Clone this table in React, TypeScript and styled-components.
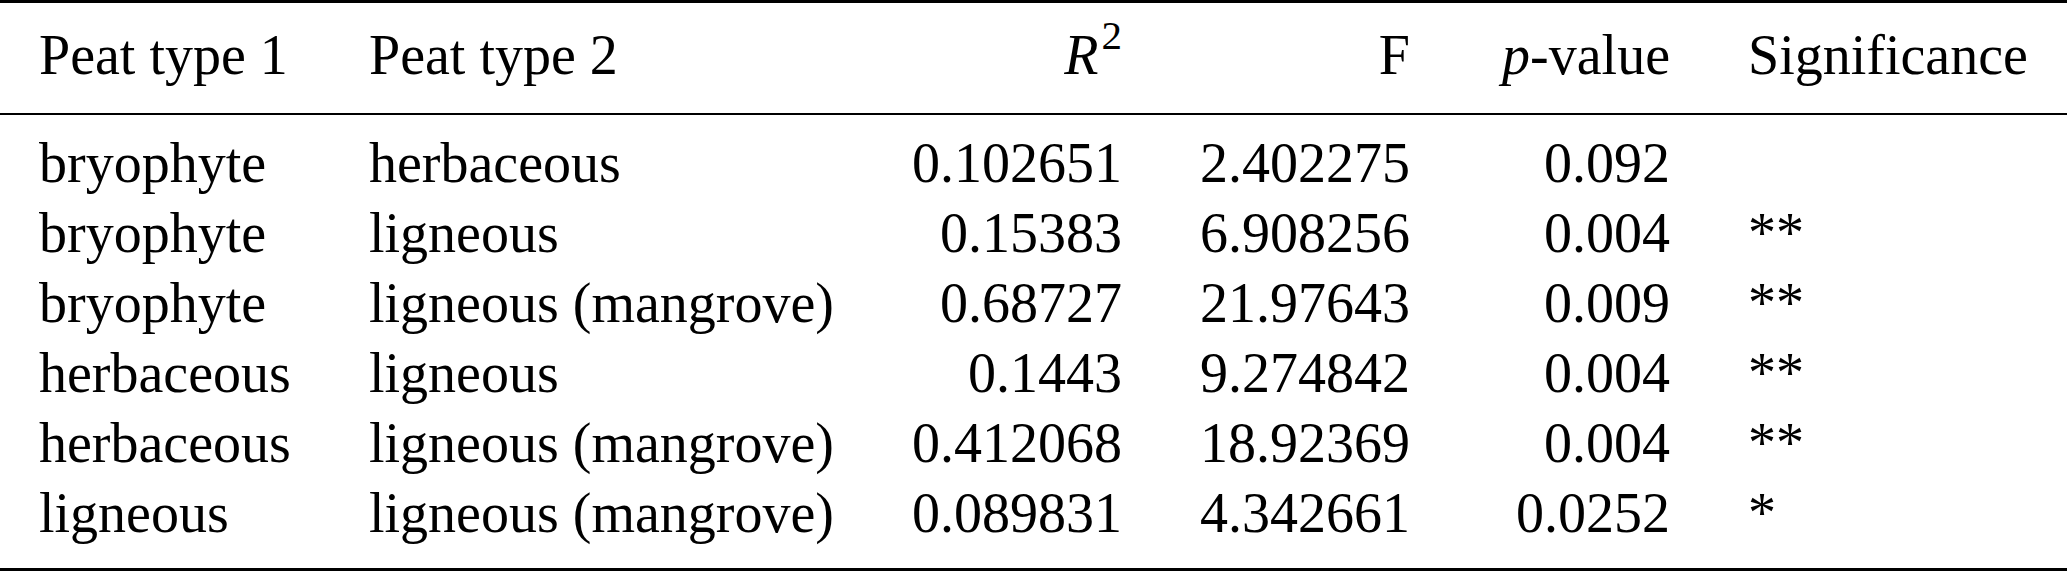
import React from "react";
import styled, { createGlobalStyle } from "styled-components";

const Global = createGlobalStyle`
  html, body {
    margin: 0;
    padding: 0;
    background: #ffffff;
    overflow: hidden;
  }
  body {
    font-family: "Liberation Serif", "Times New Roman", serif;
    color: #000000;
  }
`;

const Table = styled.div`
  width: 2067px;
  border-top: 3px solid #000;
  border-bottom: 3px solid #000;
  font-family: "Liberation Serif", "Times New Roman", serif;
  font-size: 56px;
  line-height: 70px;
  color: #000;
`;

const Section = styled.div<{ $top: number; $bottom: number; $rule?: boolean }>`
  padding: ${(p) => p.$top}px 39px ${(p) => p.$bottom}px;
  border-bottom: ${(p) => (p.$rule ? "2px solid #000" : "none")};
`;

const Row = styled.div`
  display: grid;
  grid-template-columns: 252px 465px 210px 210px 182px 1fr;
  column-gap: 78px;
  height: 70px;
`;

const Cell = styled.div<{ $right?: boolean }>`
  text-align: ${(p) => (p.$right ? "right" : "left")};
  white-space: nowrap;
`;

const Math = styled.span`
  font-style: italic;
`;

const Sup = styled.span`
  font-size: 41px;
  line-height: 0;
  vertical-align: 25px;
  margin-left: 3px;
`;

type Data = [string, string, string, string, string, string];

const rows: Data[] = [
  ["bryophyte", "herbaceous", "0.102651", "2.402275", "0.092", ""],
  ["bryophyte", "ligneous", "0.15383", "6.908256", "0.004", "**"],
  ["bryophyte", "ligneous (mangrove)", "0.68727", "21.97643", "0.009", "**"],
  ["herbaceous", "ligneous", "0.1443", "9.274842", "0.004", "**"],
  ["herbaceous", "ligneous (mangrove)", "0.412068", "18.92369", "0.004", "**"],
  ["ligneous", "ligneous (mangrove)", "0.089831", "4.342661", "0.0252", "*"],
];

export default function App() {
  return (
    <>
      <Global />
      <Table>
        <Section $top={17} $bottom={23} $rule>
          <Row>
            <Cell>Peat type 1</Cell>
            <Cell>Peat type 2</Cell>
            <Cell $right>
              <Math>R</Math>
              <Sup>2</Sup>
            </Cell>
            <Cell $right>F</Cell>
            <Cell $right>
              <Math>p</Math>-value
            </Cell>
            <Cell>Significance</Cell>
          </Row>
        </Section>
        <Section $top={13} $bottom={20}>
          {rows.map((r, i) => (
            <Row key={i}>
              <Cell>{r[0]}</Cell>
              <Cell>{r[1]}</Cell>
              <Cell $right>{r[2]}</Cell>
              <Cell $right>{r[3]}</Cell>
              <Cell $right>{r[4]}</Cell>
              <Cell>{r[5]}</Cell>
            </Row>
          ))}
        </Section>
      </Table>
    </>
  );
}
